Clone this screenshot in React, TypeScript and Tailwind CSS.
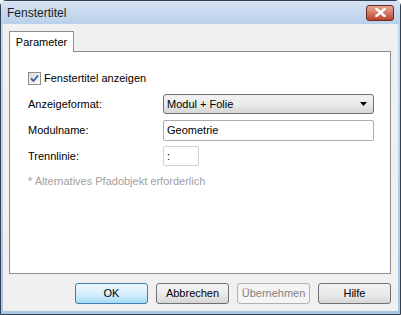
import React from 'react';

// Win7 style dialog "Fenstertitel"
function Btn({ label, primary = false, disabled = false }: { label: string; primary?: boolean; disabled?: boolean }) {
  let cls = 'border-[#707070] bg-gradient-to-b from-[#f2f2f2] via-[#ebebeb] to-[#d6d6d6] text-black';
  if (primary) cls = 'border-[#3c7fb1] bg-gradient-to-b from-[#eaf6fd] via-[#d9f0fc] to-[#a7d9f5] text-black';
  if (disabled) cls = 'border-[#adb2b5] bg-[#f4f4f4] text-[#838383]';
  return (
    <div className={`w-[73px] h-[21px] rounded-[3px] border flex items-center justify-center ${cls}`}>
      {label}
    </div>
  );
}

function Checkbox() {
  return (
    <div className="w-[13px] h-[13px] border border-[#8e8f8f] bg-gradient-to-br from-[#dcdcdc] to-[#fbfbfb] flex items-center justify-center">
      <svg width="9" height="9" viewBox="0 0 9 9">
        <path d="M1 4.5 L3.5 7 L8 1.5" fill="none" stroke="#3d5aa0" strokeWidth="1.8" />
      </svg>
    </div>
  );
}

export default function App() {
  return (
    <div
      className="w-[401px] h-[315px] border border-[#34404f] rounded-t-[6px] bg-gradient-to-b from-[#c5d8ef] via-[#b9cfea] to-[#a9c6e8] flex flex-col text-[11px] text-black"
      style={{ fontFamily: '"Liberation Sans", Arial, sans-serif' }}
    >
      <div className="h-[24px] flex items-center pl-[6px] pr-[6px] bg-gradient-to-b from-[#d7e4f4] to-[#b9cfea]">
        <span className="text-[12px] text-[#1e1e1e] flex-1">Fenstertitel</span>
        <div className="w-[28px] h-[16px] rounded-[3px] border border-[#6b2b24] bg-gradient-to-b from-[#e5a493] via-[#d27a66] to-[#b7402c] flex items-center justify-center">
          <svg width="11" height="9" viewBox="0 0 11 9">
            <path d="M1.5 1 L9.5 8 M9.5 1 L1.5 8" stroke="#ffffff" strokeWidth="2.4" strokeLinecap="square" />
          </svg>
        </div>
      </div>
      <div className="flex-1 mx-[2px] mb-[3px] bg-[#f0f0f0] flex flex-col pl-[6px] pr-[7px] pt-[7px] pb-[7px]">
        <div className="flex">
          <div className="w-[65px] h-[21px] border border-b-0 border-[#898c95] bg-white flex items-center justify-center -mb-px relative z-10">
            Parameter
          </div>
        </div>
        <div className="h-[223px] border border-[#898c95] bg-white pl-[18px] pt-[20px]">
          <div className="flex items-center gap-[3px] h-[13px]">
            <Checkbox />
            <span>Fenstertitel anzeigen</span>
          </div>
          <div className="flex items-center mt-[9px] h-[20px]">
            <span className="w-[135px]">Anzeigeformat:</span>
            <div className="w-[211px] h-[20px] rounded-[3px] border border-[#707070] bg-gradient-to-b from-[#f2f2f2] via-[#ebebeb] to-[#d6d6d6] flex items-center pl-[3px] pr-[6px]">
              <span className="flex-1">Modul + Folie</span>
              <svg width="7" height="4" viewBox="0 0 7 4">
                <path d="M0 0 H7 L3.5 4 Z" fill="#000" />
              </svg>
            </div>
          </div>
          <div className="flex items-center mt-[6px] h-[21px]">
            <span className="w-[135px]">Modulname:</span>
            <div className="w-[211px] h-[21px] rounded-[2px] border border-[#abadb3] bg-white flex items-center pl-[3px]">
              Geometrie
            </div>
          </div>
          <div className="flex items-center mt-[5px] h-[20px]">
            <span className="w-[135px]">Trennlinie:</span>
            <div className="w-[36px] h-[20px] rounded-[2px] border border-[#cfd1d7] bg-white flex items-center pl-[3px]">
              :
            </div>
          </div>
          <div className="mt-[7px] text-[#a0a0a0]">* Alternatives Pfadobjekt erforderlich</div>
        </div>
        <div className="flex justify-end gap-[8px] mt-[9px]">
          <Btn label="OK" primary />
          <Btn label="Abbrechen" />
          <Btn label="Übernehmen" disabled />
          <Btn label="Hilfe" />
        </div>
      </div>
    </div>
  );
}
